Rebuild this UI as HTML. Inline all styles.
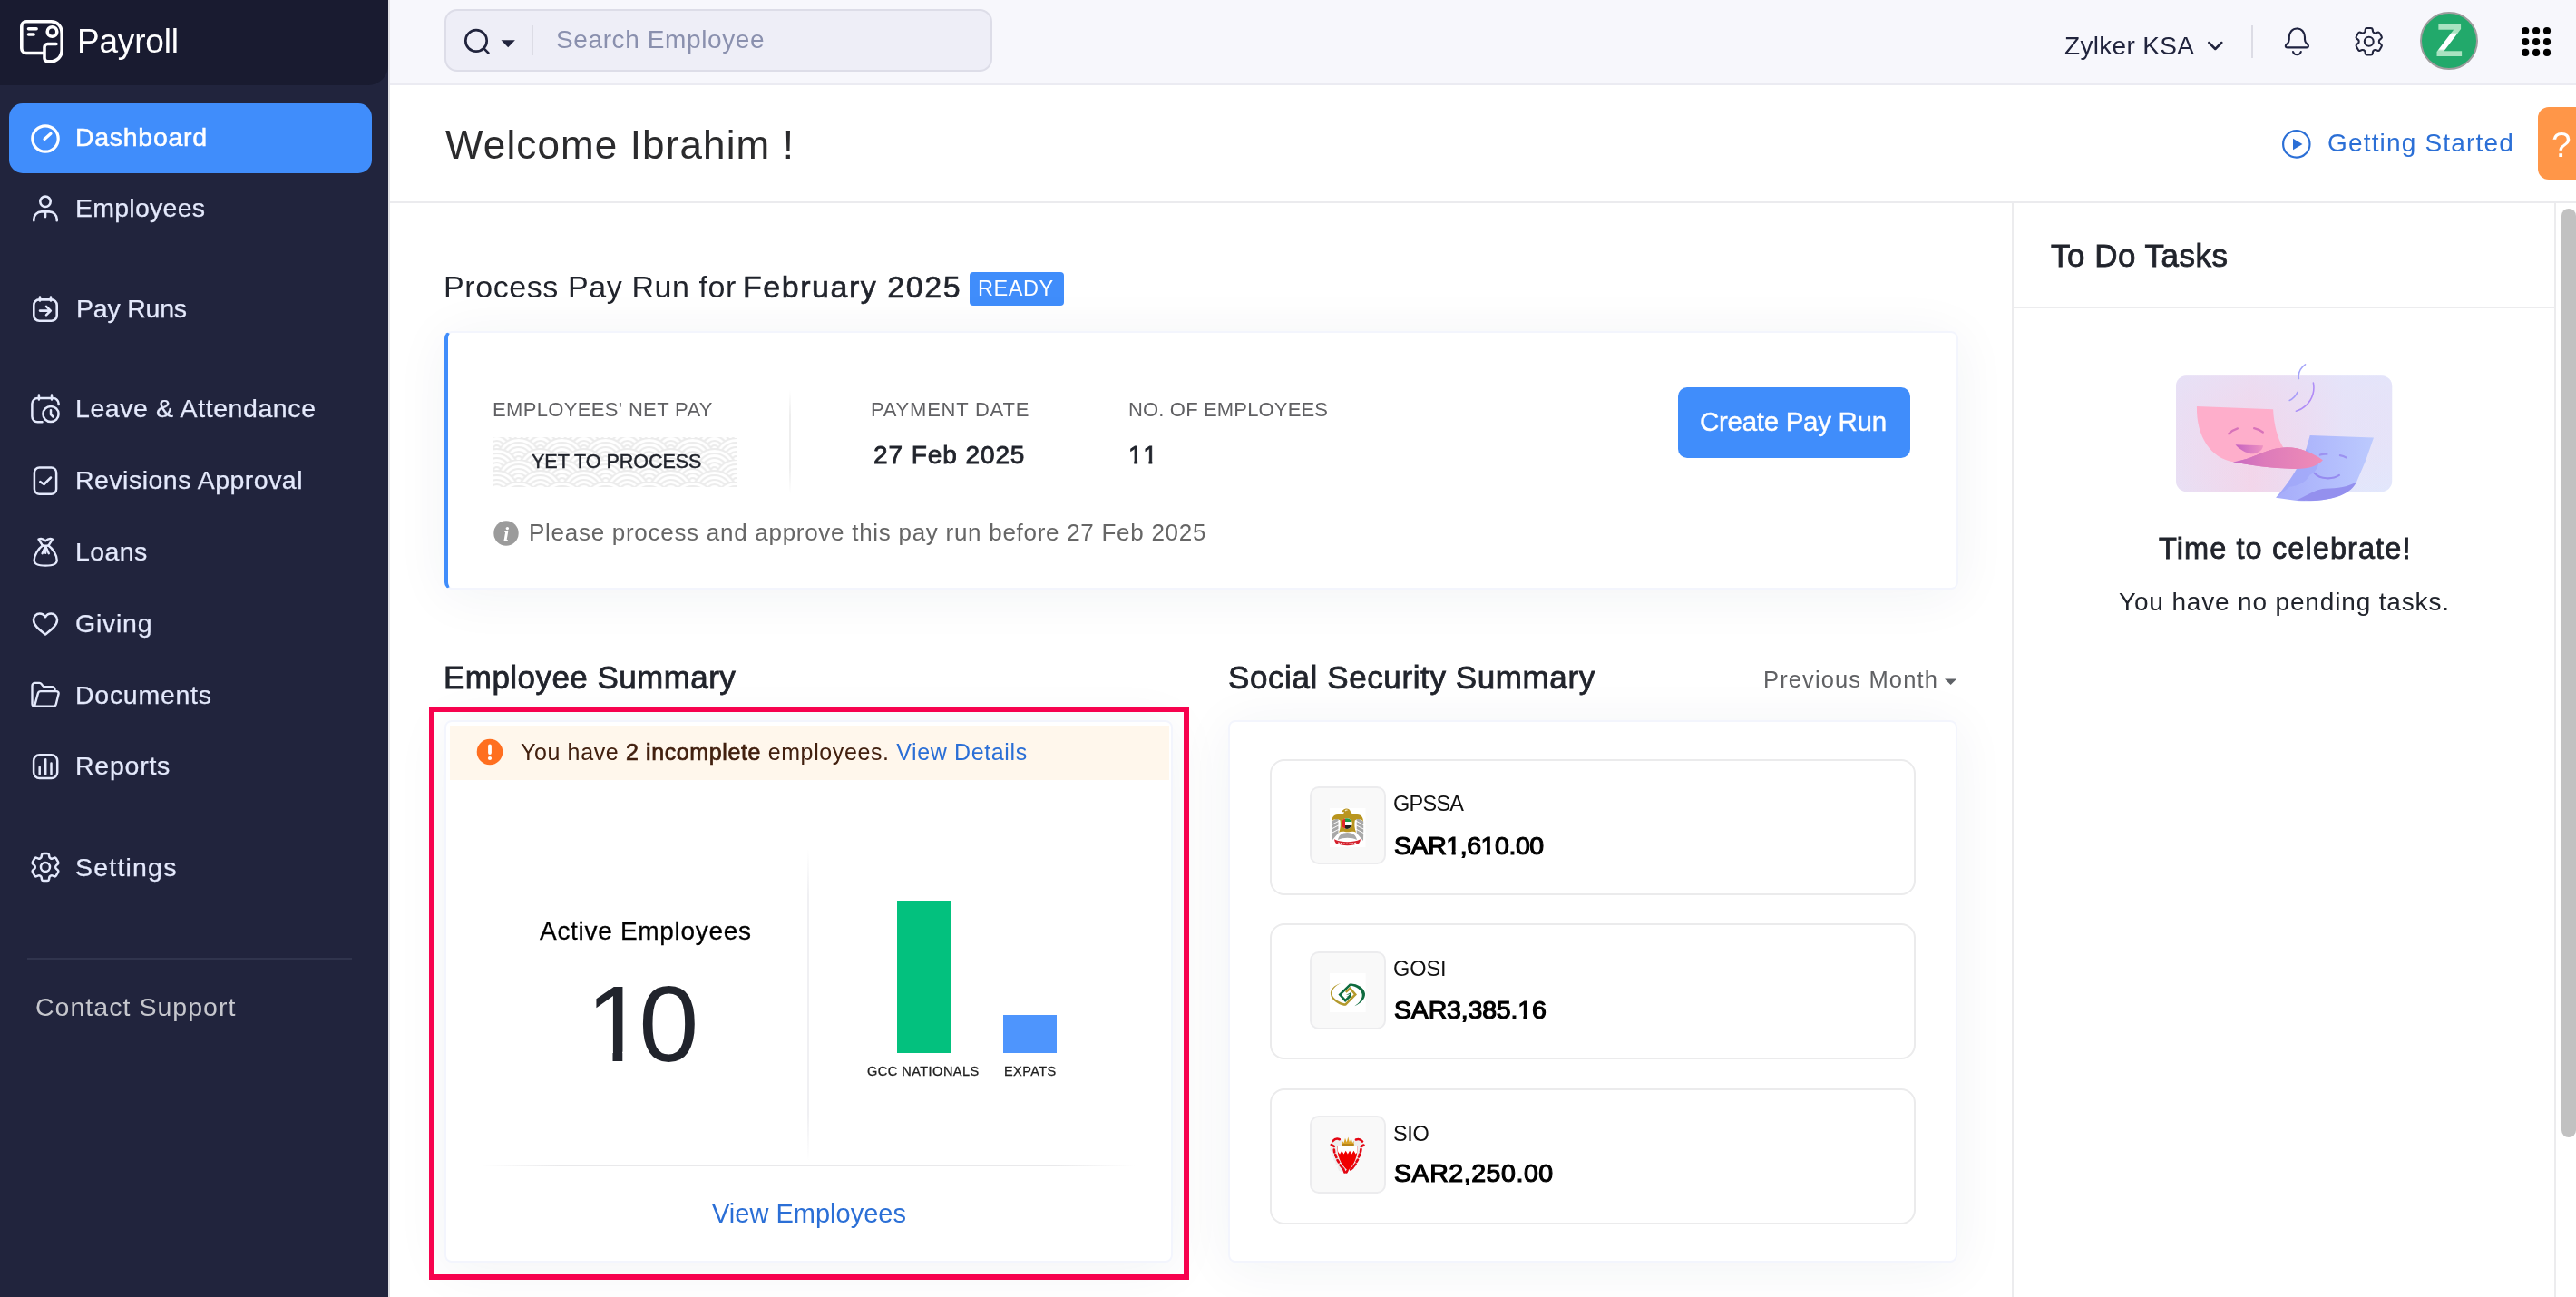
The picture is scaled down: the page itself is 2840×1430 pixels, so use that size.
<!DOCTYPE html>
<html lang="en">
<head>
<meta charset="utf-8">
<title>Payroll Dashboard</title>
<style>
*{box-sizing:border-box;margin:0;padding:0}
html,body{width:2840px;height:1430px;overflow:hidden;background:#fff}
body{font-family:"Liberation Sans",sans-serif;color:#21263c;position:relative}
.abs{position:absolute}
.t{position:absolute;white-space:nowrap;line-height:1;will-change:transform}
.m{-webkit-text-stroke:0.6px currentColor}
/* sidebar */
#side{position:absolute;left:0;top:0;width:428px;height:1430px;background:#21243d}
#brand{position:absolute;left:0;top:0;width:428px;height:94px;background:#191b30;border-bottom-right-radius:22px}
.nav{position:absolute;left:84px;white-space:nowrap;line-height:1;will-change:transform;font-size:28.5px;color:#e4e9fc;letter-spacing:.2px;-webkit-text-stroke:0.25px currentColor}
.ico{position:absolute;left:30px;width:40px;height:40px;fill:none;stroke:#e4e9fc;stroke-width:1.7;stroke-linecap:round;stroke-linejoin:round}
#active{position:absolute;left:10px;top:114px;width:400px;height:77px;border-radius:15px;background:#408dfb}
/* top bar */
#top{position:absolute;left:428px;top:0;width:2412px;height:94px;background:#f7f7fc;border-bottom:2px solid #ebebf2}
#search{position:absolute;left:490px;top:10px;width:604px;height:69px;border-radius:14px;background:#eeeef7;border:2px solid #dddde8}
/* page */
#hdrline{position:absolute;left:428px;top:222px;width:2412px;height:2px;background:#ebebee}
.card{position:absolute;background:#fff;border:2px solid #f3f5fd;border-radius:8px;box-shadow:0 6px 60px rgba(40,50,90,.058)}
.lbl{color:#606063;letter-spacing:1.1px;font-size:22px}
.ssi{position:absolute;left:1400px;width:712px;height:150px;border:2px solid #ebebec;border-radius:16px;background:#fff}
.logo{position:absolute;left:1444px;width:84px;height:86px;border:2px solid #ececee;border-radius:10px;background:#f9f9f9}
</style>
</head>
<body>

<!-- ============ SIDEBAR ============ -->
<div id="side"></div>
<div id="brand"></div>
<div id="active"></div>
<!--SIDEBAR-CONTENT-START-->
<svg class="abs" style="left:18px;top:18px" width="56" height="56" viewBox="18 18 56 56" fill="none" stroke="#fff" stroke-width="3.6" stroke-linecap="round" stroke-linejoin="round">
<path d="M49 58.5H29a5.2 5.2 0 0 1-5.200-5.200V29a5.200 5.200 0 0 1 5.200-5.200h27.500C63 23.800 68.200 29 68.200 37v17.500C68.200 62.500 63 67.800 55 67.800h-2.500a3.500 3.500 0 0 1-3.500-3.500V52a3.500 3.500 0 0 1 3.500-3.500h9.500"/>
<path d="M31.500 31.700h8.600M31.500 38h5.600"/>
<circle cx="57.500" cy="35" r="5.300"/>
</svg>
<div class="t" id="t_payroll" style="left:85.3px;top:27px;font-size:37px;color:#fff;letter-spacing:-0.2px">Payroll</div>

<svg class="ico" style="top:132.700px;stroke:#fff;stroke-width:3.200" viewBox="0 0 40 40"><circle cx="20" cy="20" r="14.200"/><path d="M19 20.500L26 14.200"/></svg>
<div class="nav" id="n0" style="-webkit-text-stroke-width:.5px;top:137.2px;color:#fff;left:83px;letter-spacing:0.71px">Dashboard</div>

<svg class="ico" style="top:209px;stroke-width:2.600" viewBox="0 0 40 40"><circle cx="20" cy="13.300" r="5.700"/><path d="M7.300 34.300v-1.500a8.400 8.400 0 0 1 8.400-8.400h8.600a8.400 8.400 0 0 1 8.400 8.400v1.500M20 24.600v5.500"/></svg>
<div class="nav" id="n1" style="top:214.8px;left:83.3px;letter-spacing:0.25px">Employees</div>

<svg class="ico" style="top:320px;stroke-width:2.600" viewBox="0 0 40 40"><rect x="7.300" y="10.400" width="25.400" height="23.400" rx="6"/><path d="M14 7.500v4M26 7.500v4M14 22.600h11.500M21 17.800l4.800 4.800-4.800 4.800"/></svg>
<div class="nav" id="n2" style="top:325.8px;left:83.6px;letter-spacing:-0.22px">Pay Runs</div>

<svg class="ico" style="top:430px;stroke-width:2.500" viewBox="0 0 40 40"><path d="M16.500 35.300H11.400a6 6 0 0 1-6-6V15.100a6 6 0 0 1 6-6h17.200a6 6 0 0 1 6 6v.8M12.900 5.600v5M27 5.600v5"/><circle cx="26" cy="26.500" r="8.600"/><path d="M26 22.300v4.700l2.500 2.500"/></svg>
<div class="nav" id="n3" style="top:436.3px;left:83.3px;letter-spacing:0.58px">Leave &amp; Attendance</div>

<svg class="ico" style="top:510px;stroke-width:2.500" viewBox="0 0 40 40"><rect x="7.900" y="5.400" width="24.200" height="29.300" rx="5.500"/><path d="M14.300 21.100l4.200 2.900 7.500-7.500"/></svg>
<div class="nav" id="n4" style="top:515.2px;left:83.3px;letter-spacing:0.48px">Revisions Approval</div>

<svg class="ico" style="top:589px;stroke-width:2.400" viewBox="0 0 40 40"><path d="M17 12.600C12 16 7.700 23.500 7.700 28.600c0 4.300 3.300 6 12.500 6s12.500-1.700 12.500-6c0-5.100-4.300-12.600-9.300-16"/><path d="M17 12.600l-4.500-7c2.500-1.200 5.300-.5 7.700 1.700 2.400-2.200 5.200-2.900 7.700-1.700l-4.500 7"/><path d="M17 12.600h6.400M20.200 13.200v7.500M20.200 13.200l-3.600 8M20.200 13.200l3.600 8"/></svg>
<div class="nav" id="n5" style="top:593.9px;left:83.3px;letter-spacing:0.39px">Loans</div>

<svg class="ico" style="top:668px;stroke-width:2.500" viewBox="0 0 40 40"><path d="M20 31.500C13 26 7 21.500 7 15.600c0-4 3-7 6.700-7 2.600 0 4.900 1.400 6.300 3.700 1.400-2.300 3.700-3.700 6.300-3.700 3.700 0 6.700 3 6.700 7 0 5.900-6 10.400-13 15.900z"/></svg>
<div class="nav" id="n6" style="top:672.9px;left:83.3px;letter-spacing:0.76px">Giving</div>

<svg class="ico" style="top:746px;stroke-width:2.400" viewBox="0 0 40 40"><path d="M30.500 15.500v-1.200a3 3 0 0 0-3-3H19.500c-1 0-1.700-.4-2.300-1.200l-1.500-2c-.6-.8-1.300-1.200-2.300-1.200H8.500a3 3 0 0 0-3 3v19.800c0 1.700 1 2.900 2.600 2.900"/><path d="M8.100 32.600h20.800c1.500 0 2.500-.8 2.900-2.300l2.700-11.200c.4-1.800-.6-3-2.400-3H14.800c-1.500 0-2.500.8-2.900 2.300L8.700 30.300c-.3 1.300-.6 2.300-.6 2.300z"/></svg>
<div class="nav" id="n7" style="top:751.9px;left:83.3px;letter-spacing:0.73px">Documents</div>

<svg class="ico" style="top:825px;stroke-width:2.500" viewBox="0 0 40 40"><rect x="7.100" y="7.300" width="26.100" height="25.800" rx="6.500"/><path d="M13.700 20.700v7.700M20.200 12.300v16.100M26.500 16.500v11.900"/></svg>
<div class="nav" id="n8" style="top:830.3px;left:83.3px;letter-spacing:0.76px">Reports</div>

<svg class="ico" style="top:936px;stroke-width:1.500" viewBox="0 0 24 24"><path d="M9.594 3.94c.09-.542.56-.94 1.110-.94h2.593c.55 0 1.020.398 1.110.94l.213 1.281c.063.374.313.686.645.87.074.04.147.083.220.127.325.196.720.257 1.075.124l1.217-.456a1.125 1.125 0 0 1 1.370.49l1.296 2.247a1.125 1.125 0 0 1-.260 1.431l-1.003.827c-.293.241-.438.613-.430.992a7.723 7.723 0 0 1 0 .255c-.008.378.137.750.430.991l1.004.827c.424.350.534.955.260 1.430l-1.298 2.247a1.125 1.125 0 0 1-1.369.491l-1.217-.456c-.355-.133-.750-.072-1.076.124a6.470 6.470 0 0 1-.220.128c-.331.183-.581.495-.644.869l-.213 1.281c-.09.543-.560.940-1.110.940h-2.594c-.55 0-1.019-.398-1.110-.940l-.213-1.281c-.062-.374-.312-.686-.644-.870a6.520 6.520 0 0 1-.220-.127c-.325-.196-.720-.257-1.076-.124l-1.217.456a1.125 1.125 0 0 1-1.369-.490l-1.297-2.247a1.125 1.125 0 0 1 .260-1.431l1.004-.827c.292-.240.437-.613.430-.991a6.932 6.932 0 0 1 0-.255c.007-.380-.138-.751-.430-.992l-1.004-.827a1.125 1.125 0 0 1-.260-1.430l1.297-2.247a1.125 1.125 0 0 1 1.370-.491l1.216.456c.356.133.751.072 1.076-.124.072-.044.146-.086.220-.128.332-.183.582-.495.644-.869l.214-1.280z"/><circle cx="12" cy="12" r="3"/></svg>
<div class="nav" id="n9" style="top:941.9px;left:83px;letter-spacing:1.2px">Settings</div>

<div class="abs" style="left:30px;top:1056px;width:358px;height:2px;background:#30344d"></div>
<div class="t" id="t_contact" style="left:38.9px;top:1096px;font-size:28.500px;color:#c6c7cd;letter-spacing:1.03px">Contact Support</div>
<!--SIDEBAR-CONTENT-END-->

<!-- ============ TOP BAR ============ -->
<div id="top"></div>
<div id="search"></div>
<!--TOPBAR-CONTENT-START-->
<svg class="abs" style="left:505px;top:25px" width="70" height="40" viewBox="505 25 70 40" fill="none" stroke="#21243d" stroke-width="2.700" stroke-linecap="round"><circle cx="525" cy="44.900" r="11.700"/><path d="M533.400 53.400l5 5"/><path d="M552.500 44.300h15.400l-7.700 8z" fill="#21243d" stroke="none"/></svg>
<div class="abs" style="left:586px;top:28px;width:2px;height:33px;background:#dcdce5"></div>
<div class="t" id="t_search" style="left:613px;top:30px;font-size:28px;color:#8a90ae;letter-spacing:0.61px">Search Employee</div>

<div class="t" id="t_org" style="left:2276.2px;top:36.6px;font-size:28px;color:#21243d;letter-spacing:0.32px">Zylker KSA</div>
<svg class="abs" style="left:2430px;top:40px" width="26" height="20" viewBox="2430 40 26 20" fill="none" stroke="#21243d" stroke-width="2.500" stroke-linecap="round" stroke-linejoin="round"><path d="M2435.300 47l7 7 7-7"/></svg>
<div class="abs" style="left:2482px;top:28px;width:2px;height:36px;background:#dcdce5"></div>
<svg class="abs" style="left:2512px;top:26px" width="40" height="40" viewBox="2512 26 40 40" fill="none" stroke="#1f2340" stroke-width="2.100" stroke-linecap="round" stroke-linejoin="round"><path d="M2532.400 31.500c-5.200 0-8.600 4.200-8.600 9.600v2.300c0 2.500-1.100 4-2.800 5.400-1.600 1.300-1.800 3.600.9 3.600h21c2.700 0 2.500-2.300.9-3.600-1.700-1.400-2.800-2.900-2.800-5.400v-2.300c0-5.400-3.400-9.600-8.600-9.600z"/><path d="M2528 57a4.600 4.600 0 0 0 8.800 0"/></svg>
<svg class="abs" style="left:2592.200px;top:26px;stroke-width:1.270" width="39.500" height="39.500" viewBox="0 0 24 24" fill="none" stroke="#21243d" stroke-linecap="round" stroke-linejoin="round"><path d="M9.594 3.94c.09-.542.56-.94 1.110-.94h2.593c.55 0 1.020.398 1.110.94l.213 1.281c.063.374.313.686.645.87.074.04.147.083.220.127.325.196.720.257 1.075.124l1.217-.456a1.125 1.125 0 0 1 1.370.49l1.296 2.247a1.125 1.125 0 0 1-.260 1.431l-1.003.827c-.293.241-.438.613-.430.992a7.723 7.723 0 0 1 0 .255c-.008.378.137.750.430.991l1.004.827c.424.350.534.955.260 1.430l-1.298 2.247a1.125 1.125 0 0 1-1.369.491l-1.217-.456c-.355-.133-.750-.072-1.076.124a6.470 6.470 0 0 1-.220.128c-.331.183-.581.495-.644.869l-.213 1.281c-.09.543-.560.940-1.110.940h-2.594c-.55 0-1.019-.398-1.110-.940l-.213-1.281c-.062-.374-.312-.686-.644-.870a6.520 6.520 0 0 1-.220-.127c-.325-.196-.720-.257-1.076-.124l-1.217.456a1.125 1.125 0 0 1-1.369-.490l-1.297-2.247a1.125 1.125 0 0 1 .260-1.431l1.004-.827c.292-.240.437-.613.430-.991a6.932 6.932 0 0 1 0-.255c.007-.380-.138-.751-.430-.992l-1.004-.827a1.125 1.125 0 0 1-.260-1.430l1.297-2.247a1.125 1.125 0 0 1 1.370-.491l1.216.456c.356.133.751.072 1.076-.124.072-.044.146-.086.220-.128.332-.183.582-.495.644-.869l.214-1.280z"/><circle cx="12" cy="12" r="3"/></svg>
<div class="abs" style="left:2668.200px;top:12.800px;width:64px;height:64px;border-radius:50%;background:#22a96b;border:2px solid #9d9d9d"></div>
<div class="t" id="t_z" style="left:2684.500px;top:19.800px;font-size:50px;font-weight:bold;color:transparent;background:linear-gradient(180deg,#a9e3c1 0,#a9e3c1 32%,#fff 36%,#fff 68%,#a9e3c1 72%);-webkit-background-clip:text;background-clip:text">Z</div>
<svg class="abs" style="left:2776px;top:27px" width="40" height="38" viewBox="2776 27 40 38" fill="#000"><circle cx="2784.2" cy="34" r="4.100"/><circle cx="2796.1" cy="34" r="4.100"/><circle cx="2808" cy="34" r="4.100"/><circle cx="2784.2" cy="46" r="4.100"/><circle cx="2796.1" cy="46" r="4.100"/><circle cx="2808" cy="46" r="4.100"/><circle cx="2784.2" cy="57.9" r="4.100"/><circle cx="2796.1" cy="57.9" r="4.100"/><circle cx="2808" cy="57.9" r="4.100"/></svg>
<!--TOPBAR-CONTENT-END-->

<!-- ============ PAGE HEADER ============ -->
<div id="hdrline"></div>
<div class="abs" style="left:428px;top:0;width:2px;height:1430px;background:#e2e2e6"></div>
<!--HEADER-CONTENT-START-->
<div class="t" id="t_welcome" style="left:491px;top:137.8px;font-size:44px;color:#2b2b2d;letter-spacing:1.12px">Welcome Ibrahim !</div>
<svg class="abs" style="left:2514px;top:141px" width="36" height="36" viewBox="2514 141 36 36" fill="none" stroke="#2b6fd6" stroke-width="2.200"><circle cx="2531.800" cy="158.900" r="14.700"/><path d="M2528 152.800v12.400l10.500-6.200z" fill="#2b6fd6" stroke="none"/></svg>
<div class="t" id="t_gs" style="left:2565.8px;top:143.5px;font-size:28px;color:#2b6fd6;letter-spacing:1.17px">Getting Started</div>
<div class="abs" style="left:2798px;top:118px;width:60px;height:80px;border-radius:12px;background:#ff9648"></div>
<div class="t" id="t_q" style="left:2813px;top:140px;font-size:39px;color:#fff">?</div>
<!--HEADER-CONTENT-END-->

<!-- ============ MAIN ============ -->
<!--MAIN-CONTENT-START-->
<!-- Process pay run heading -->
<div class="t" id="t_pp1" style="left:488.8px;top:299.4px;font-size:34px;color:#21242c;letter-spacing:0.59px">Process Pay Run for</div>
<div class="t m" id="t_pp2" style="left:819.3px;top:299.4px;font-size:34px;color:#21242c;letter-spacing:1.54px">February 2025</div>
<div class="abs" style="left:1069px;top:300px;width:104px;height:37px;border-radius:4px;background:#408dfb"></div>
<div class="t" id="t_ready" style="left:1077.9px;top:306.9px;font-size:23.500px;color:#fff;letter-spacing:0.55px">READY</div>

<!-- Pay run card -->
<div class="card" style="left:490px;top:364.800px;width:1668.500px;height:284.800px;border-left:4px solid #408dfb;border-radius:8px"></div>
<div class="t lbl" id="t_l1" style="left:542.8px;top:440.6px;letter-spacing:0.35px">EMPLOYEES' NET PAY</div>
<svg class="abs" style="left:544px;top:482px" width="268" height="55" viewBox="0 0 268 55"><defs><pattern id="sg" width="48" height="24" patternUnits="userSpaceOnUse" patternTransform="translate(3.700 1)"><rect width="48" height="24" fill="#fff"/><g fill="#fff" stroke="#ececec" stroke-width="2.200"><circle cx="0" cy="-12" r="24"/><circle cx="0" cy="-12" r="19"/><circle cx="0" cy="-12" r="14"/><circle cx="0" cy="-12" r="9"/><circle cx="0" cy="-12" r="4"/><circle cx="48" cy="-12" r="24"/><circle cx="48" cy="-12" r="19"/><circle cx="48" cy="-12" r="14"/><circle cx="48" cy="-12" r="9"/><circle cx="48" cy="-12" r="4"/><circle cx="24" cy="0" r="24"/><circle cx="24" cy="0" r="19"/><circle cx="24" cy="0" r="14"/><circle cx="24" cy="0" r="9"/><circle cx="24" cy="0" r="4"/><circle cx="0" cy="12" r="24"/><circle cx="0" cy="12" r="19"/><circle cx="0" cy="12" r="14"/><circle cx="0" cy="12" r="9"/><circle cx="0" cy="12" r="4"/><circle cx="48" cy="12" r="24"/><circle cx="48" cy="12" r="19"/><circle cx="48" cy="12" r="14"/><circle cx="48" cy="12" r="9"/><circle cx="48" cy="12" r="4"/><circle cx="24" cy="24" r="24"/><circle cx="24" cy="24" r="19"/><circle cx="24" cy="24" r="14"/><circle cx="24" cy="24" r="9"/><circle cx="24" cy="24" r="4"/><circle cx="0" cy="36" r="24"/><circle cx="0" cy="36" r="19"/><circle cx="0" cy="36" r="14"/><circle cx="0" cy="36" r="9"/><circle cx="0" cy="36" r="4"/><circle cx="48" cy="36" r="24"/><circle cx="48" cy="36" r="19"/><circle cx="48" cy="36" r="14"/><circle cx="48" cy="36" r="9"/><circle cx="48" cy="36" r="4"/></g></pattern></defs><rect width="268" height="55" fill="url(#sg)"/></svg>
<div class="t m" id="t_ytp" style="-webkit-text-stroke-width:.45px;left:586px;top:498.5px;font-size:21.500px;color:#21242c;letter-spacing:-0.01px">YET TO PROCESS</div>
<div class="abs" style="left:870px;top:430px;width:2px;height:114px;background:linear-gradient(180deg,rgba(238,238,238,0),#eee 25%,#eee 75%,rgba(238,238,238,0))"></div>
<div class="t lbl" id="t_l2" style="left:959.8px;top:440.6px;letter-spacing:0.77px">PAYMENT DATE</div>
<div class="t m" id="t_date" style="left:962.6px;top:488.3px;font-size:28px;color:#21242c;-webkit-text-stroke-width:.8px;letter-spacing:0.92px">27 Feb 2025</div>
<div class="t lbl" id="t_l3" style="left:1243.5px;top:440.6px;letter-spacing:0.16px">NO. OF EMPLOYEES</div>
<div class="t m" id="t_11" style="left:1243.800px;top:488.300px;font-size:28px;color:#21242c;-webkit-text-stroke-width:.8px;letter-spacing:.600px"><span style="display:inline-block;clip-path:polygon(0 0,100% 0,100% 19.800px,10.100px 19.800px,10.100px 100%,6.300px 100%,6.300px 19.800px,0 19.800px)">1</span><span style="display:inline-block;clip-path:polygon(0 0,100% 0,100% 19.800px,10.100px 19.800px,10.100px 100%,6.300px 100%,6.300px 19.800px,0 19.800px)">1</span></div>
<div class="abs" style="left:1850px;top:427px;width:256px;height:78px;border-radius:10px;background:#408dfb"></div>
<div class="t" id="t_btn" style="left:1874.3px;top:450.3px;font-size:29.500px;color:#fff;letter-spacing:-0.29px;-webkit-text-stroke:.4px #fff">Create Pay Run</div>
<svg class="abs" style="left:544px;top:574px" width="28" height="28" viewBox="0 0 28 28"><circle cx="14" cy="14" r="13.700" fill="#9b9b9b"/><text x="14" y="21.500" text-anchor="middle" font-family="Liberation Serif,serif" font-style="italic" font-weight="bold" font-size="22" fill="#fff">i</text></svg>
<div class="t" id="t_info" style="left:583.2px;top:573.9px;font-size:26px;color:#666;letter-spacing:0.72px">Please process and approve this pay run before 27 Feb 2025</div>

<!-- Employee summary -->
<div class="t m" id="t_es" style="-webkit-text-stroke-width:.8px;left:489px;top:729px;font-size:35px;color:#21242c;letter-spacing:0.45px">Employee Summary</div>
<div class="card" style="left:490px;top:793.600px;width:803px;height:598px"></div>
<div class="abs" style="left:495.500px;top:800px;width:793px;height:60px;background:#fff7ec"></div>
<svg class="abs" style="left:525px;top:814px" width="30" height="30" viewBox="0 0 30 30"><circle cx="15" cy="15" r="14.300" fill="#ff6f20"/><rect x="13.100" y="6.500" width="3.800" height="11.500" rx="1.900" fill="#fff"/><circle cx="15" cy="22" r="2.100" fill="#fff"/></svg>
<div class="t" id="t_alert" style="left:573.8px;top:816.6px;font-size:25px;color:#42200f;letter-spacing:0.62px">You have <span class="m" style="-webkit-text-stroke-width:.7px">2 incomplete</span> employees. <span style="color:#2b6fd6" id="t_vd">View Details</span></div>
<div class="t" id="t_ae" style="-webkit-text-stroke:.3px #000;left:595px;top:1013.3px;font-size:28px;color:#000;letter-spacing:0.7px">Active Employees</div>
<div class="t" id="t_10" style="left:646px;top:1069.400px;font-size:119px;color:#21242c;letter-spacing:-8px"><span style="display:inline-block;clip-path:polygon(0 0,100% 0,100% 90.700px,40.300px 90.700px,40.300px 100%,29.500px 100%,29.500px 90.700px,0 90.700px)">1</span>0</div>
<div class="abs" style="left:890px;top:936px;width:2px;height:344px;background:linear-gradient(180deg,rgba(240,240,243,0),#f0f0f3 15%,#f0f0f3 85%,rgba(240,240,243,0))"></div>
<div class="abs" style="left:989px;top:993px;width:59px;height:168px;background:#03c17e"></div>
<div class="abs" style="left:1106px;top:1119px;width:59px;height:42px;background:#4e95fd"></div>
<div class="t" id="t_gcc" style="left:955.7px;top:1173.8px;font-size:14.500px;-webkit-text-stroke:.3px #222;color:#222;letter-spacing:0.49px">GCC NATIONALS</div>
<div class="t" id="t_exp" style="left:1106.7px;top:1173.8px;font-size:14.500px;-webkit-text-stroke:.3px #222;color:#222;letter-spacing:0.4px">EXPATS</div>
<div class="abs" style="left:530px;top:1284px;width:722px;height:2px;background:linear-gradient(90deg,rgba(233,233,235,0),#e9e9eb 12%,#e9e9eb 88%,rgba(233,233,235,0))"></div>
<div class="t" id="t_ve" style="left:785px;top:1324.1px;font-size:29px;color:#2b6fd6;letter-spacing:0.01px">View Employees</div>
<div class="abs" style="left:473px;top:779px;width:838px;height:632px;border:6px solid #f7024e"></div>

<!-- Social security -->
<div class="t m" id="t_ss" style="-webkit-text-stroke-width:.8px;left:1353.7px;top:729px;font-size:35px;color:#21242c;letter-spacing:0.6px">Social Security Summary</div>
<div class="t" id="t_pm" style="left:1943.5px;top:737.2px;font-size:25.500px;color:#606164;letter-spacing:1.13px">Previous Month</div>
<svg class="abs" style="left:2143px;top:747px" width="16" height="10" viewBox="0 0 16 10"><path d="M1 1.400h13.200l-6.600 6.600z" fill="#5e6166"/></svg>
<div class="card" style="left:1354px;top:793.600px;width:804px;height:598px"></div>

<div class="ssi" style="top:836.500px"></div>
<div class="logo" style="top:867px"></div>
<div class="t" id="t_s1n" style="left:1535.6px;top:875.4px;font-size:23.500px;color:#111;letter-spacing:-0.75px">GPSSA</div>
<div class="t m" id="t_s1a" style="left:1536.6px;top:918.1px;font-size:28.500px;color:#000;-webkit-text-stroke-width:1.200px;letter-spacing:-0.44px">SAR<span style="display:inline-block;clip-path:polygon(0 0,100% 0,100% 20.100px,10.400px 20.100px,10.400px 100%,6.300px 100%,6.300px 20.100px,0 20.100px)">1</span>,6<span style="display:inline-block;clip-path:polygon(0 0,100% 0,100% 20.100px,10.400px 20.100px,10.400px 100%,6.300px 100%,6.300px 20.100px,0 20.100px)">1</span>0.00</div>

<div class="ssi" style="top:1018px"></div>
<div class="logo" style="top:1049px"></div>
<div class="t" id="t_s2n" style="left:1535.6px;top:1057.1px;font-size:23.500px;color:#111;letter-spacing:-0.07px">GOSI</div>
<div class="t m" id="t_s2a" style="left:1536.6px;top:1099.1px;font-size:28.500px;color:#000;-webkit-text-stroke-width:1.200px;letter-spacing:-0.18px">SAR3,385.<span style="display:inline-block;clip-path:polygon(0 0,100% 0,100% 20.100px,10.400px 20.100px,10.400px 100%,6.300px 100%,6.300px 20.100px,0 20.100px)">1</span>6</div>

<div class="ssi" style="top:1199.500px"></div>
<div class="logo" style="top:1230px"></div>
<div class="t" id="t_s3n" style="left:1535.6px;top:1238.7px;font-size:23.500px;color:#111;letter-spacing:-0.4px">SIO</div>
<div class="t m" id="t_s3a" style="left:1536.6px;top:1279.2px;font-size:28.500px;color:#000;-webkit-text-stroke-width:1.200px;letter-spacing:0.56px">SAR2,250.00</div>
<!--LOGOS-START-->
<svg class="abs" style="left:1466px;top:890.500px" width="39.500" height="43.500" viewBox="0 0 39.500 43.500">
<rect width="39.500" height="43.500" fill="#fff"/>
<g fill="#a8a8a8"><path d="M2 14.500l7.500-4v3.500L2 18zM2 19l7.500-4v3.500L2 22.500zM2 23.500l7.500-4v3.500L2 27zM2 28l7.500-4v3.500L2.200 36zM37.200 14.500l-7.500-4v3.500l7.500 4zM37.200 19l-7.500-4v3.500l7.500 4zM37.200 23.500l-7.500-4v3.500l7.500 4zM37.200 28l-7.500-4v3.500l7.300 8.500z"/><path d="M9 35c1-5 4-8 10.500-8S29 30 30 35c-3-1.500-6.500-2.200-10.500-2.200S12 33.500 9 35z"/></g>
<path d="M17.800.6c2.300-.5 4.300.8 5 3 .5 1.600 1.500 2.600 3.300 2.900 2.600.4 5.700.1 8 1.600 1.900 1.300 2.800 3.600 2.900 6.400-1.700-1.800-4-2.600-6.800-2.400l-2.500 1.500c-.6 4.500-.5 9 1.400 13.200-1.600-1-3-1.300-4.300-1-1.600.4-3 .4-5.200.4s-3.600 0-5.200-.4c-1.300-.3-2.700 0-4.300 1 1.900-4.200 2-8.700 1.400-13.200L9 12.100c-2.800-.2-5.100.6-6.800 2.400.1-2.800 1-5.100 2.900-6.400 2.300-1.500 5.400-1.200 8-1.600 1.500-.2 2.500-.9 3.100-2.100l-3-.4c.9-1.700 2.500-3 4.600-3.400z" fill="#b9951f"/>
<path d="M16.500 2.200c1.200-.9 3-1 4.200.2-1.300-.2-2.300.2-3 1.200l-1.200-1.400z" fill="#f3ead0"/>
<circle cx="19" cy="17" r="5.900" fill="#fff"/>
<path d="M17 11.500a5.900 5.900 0 0 1 7.500 3.500H17z" fill="#1f9a48"/><path d="M17 19h7.500a5.900 5.900 0 0 1-7.500 3.600z" fill="#222"/><path d="M17 11.400v11.200A5.900 5.900 0 0 1 17 11.400z" fill="#e32626"/>
<path d="M5 34.300c4.500 2.200 9.300 2.900 14.500 2.900s10-.7 14.500-2.900c-.2 1.800-.8 3.300-1.800 4.500-3.800 1.700-8 2.400-12.700 2.400s-8.900-.7-12.700-2.400C5.800 37.600 5.200 36.100 5 34.300z" fill="#d4202c"/>
<path d="M9 38c3.400.9 7 1.300 10.500 1.300s7.100-.4 10.500-1.300" fill="none" stroke="#f6d9db" stroke-width="1.100" stroke-dasharray="2.200 .8"/>
</svg>
<svg class="abs" style="left:1466px;top:1072.500px" width="39.700" height="43.500" viewBox="0 0 39.700 43.500">
<rect width="39.700" height="43.500" fill="#fff"/>
<path d="M12.300 10.900C4.500 13.300.2 18 1 23.500c.9 5.800 7.500 10.800 15.500 12.600l1.800-2.300C10.500 32.300 3.600 28.300 2.600 23 1.800 18.600 5.800 14 12.300 10.900z" fill="#b49a2e"/>
<path d="M16.800 35.200L28.300 23.500l-5.900-6.800-4.700 4.200" fill="none" stroke="#b49a2e" stroke-width="2.500" stroke-linejoin="miter"/>
<path d="M22.400 11.200c8.800.5 16.100 5.200 16.600 11.400.4 5.600-4.400 10.800-11.600 13.600 5.300-3.400 8.700-7.900 8.300-12.700-.5-5.200-6.200-8.900-13.300-10.100z" fill="#0e6b3f"/>
<path d="M22.800 12.300L11.200 23.500l6 6.700 6-5.700" fill="none" stroke="#0e6b3f" stroke-width="2.500" stroke-linejoin="miter"/>
<path d="M22.500 21.300c-1.200 1.400-2.800 2.100-4.500 2.400 1.700.2 3.200-.1 4.500-.9-.9 1.600-2.400 2.600-4.300 3.100 2.600.1 4.600-.9 5.600-3z" fill="#0e6b3f"/>
</svg>
<svg class="abs" style="left:1466px;top:1253px" width="39.700" height="43.500" viewBox="0 0 39.700 43.500">
<path d="M3 4.500c2-2.500 5-3.500 8-2l3 3h11.500l3-2.700c3-1.200 6-.3 7.800 2.200l1.500 3-2 1.500.5 2.800-2 1.200.2 3-2.200 1.500-.2 3-2 2-.2 3.200-2.300 1.800-1 3-3 1.500-1 3-3.500.5-1.500 2.500-2.300-2.200-2.200 3-3-1.500-1.500-3.500.8-2-2.800-1.500-.5-3-2-2 .3-3-2.300-2.200.5-3-2.500-2 .5-3.200L1 9l2-1.500z" fill="#ededed"/>
<path d="M3.500 5c2-2.300 4.800-3 7.300-1.800M1.800 9.200l3 1.600M4.800 14.500l.4 3M6.300 20l1 3M8.500 26l1.500 2.500M11.500 31.500l2 2.500M15 35.500l1.500 4M18.500 39.500l1-2M36 5.500c-1.800-2.200-4.500-3-7-2M37.500 9.500l-2.800 1.500M34.500 14l-.5 3M33 19.500l-1 3M31 25.500l-1.500 2.500M28.500 30.500l-2 2.500M25.500 34.500l-2.500 2" fill="none" stroke="#e30613" stroke-width="2.600" stroke-linecap="round"/>
<path d="M8.500 10.800h22c.4 9.500-2.300 19.500-10.500 27C11.200 30.300 8.200 20.300 8.500 10.800z" fill="#f00000"/>
<path d="M8.500 10.800h22c.1 2.200 0 4.400-.3 6.600l-1.500 2-2.200-3.600-2.200 3.600-2.200-3.600-2.200 3.600-2.200-3.600-2.200 3.600-2.200-3.600-2.200 3.600-1.900-2.500c-.4-2.100-.6-4.100-.5-6.100z" fill="#fff"/>
<path d="M13.900 10V5l1.600 2.200L17 1.800l1.700 4.600L20.300.6l1.600 5.800 1.700-4.600 1.500 5.400L26.600 5v5z" fill="#d9a326"/><path d="M13.900 8h12.700v2.200H13.900z" fill="#b88418"/>
</svg>
<!--LOGOS-END-->
<!--MAIN-CONTENT-END-->

<!-- ============ TODO PANEL ============ -->
<!--TODO-CONTENT-START-->
<div class="abs" style="left:2218px;top:224px;width:2px;height:1206px;background:#ececee"></div>
<div class="abs" style="left:2816px;top:224px;width:2px;height:1206px;background:#ececee"></div>
<div class="abs" style="left:2218px;top:338px;width:600px;height:2px;background:#ececee"></div>
<div class="abs" style="left:2824px;top:230px;width:16px;height:1024px;background:#c1c1c1;border-radius:8px 8px 8px 8px"></div>
<div class="t m" id="t_todo" style="-webkit-text-stroke-width:.8px;left:2260.9px;top:263.6px;font-size:35px;color:#21242c;letter-spacing:0.51px">To Do Tasks</div>
<!--ILLUS-START-->
<svg class="abs" style="left:2380px;top:390px" width="280" height="170" viewBox="0 0 280 170">
<defs>
<linearGradient id="ibg" x1="0" y1="0" x2="1" y2="0"><stop offset="0" stop-color="#e8e0f5"/><stop offset=".35" stop-color="#f2d6ea"/><stop offset=".6" stop-color="#eaddf3"/><stop offset=".78" stop-color="#e3e6fb"/><stop offset="1" stop-color="#e2e7fc"/></linearGradient>
<linearGradient id="ibg2" x1="0" y1="0" x2="0" y2="1"><stop offset="0" stop-color="#e6e2f8" stop-opacity=".55"/><stop offset="1" stop-color="#f8d0e6" stop-opacity="0"/></linearGradient>
<linearGradient id="icurl" x1="0" y1="0" x2="1" y2="0"><stop offset="0" stop-color="#c768c2"/><stop offset=".35" stop-color="#dd7bba"/><stop offset="1" stop-color="#ef8cb7"/></linearGradient>
<linearGradient id="imouth" x1="0" y1="0" x2="1" y2="0"><stop offset="0" stop-color="#c562c1"/><stop offset="1" stop-color="#ee92c2"/></linearGradient>
<linearGradient id="iblue" x1="0" y1="0" x2="1" y2="0"><stop offset="0" stop-color="#a6acfa"/><stop offset="1" stop-color="#bccafe"/></linearGradient>
<linearGradient id="iarc" x1="0" y1="0" x2="1" y2="1"><stop offset="0" stop-color="#9db4fb"/><stop offset="1" stop-color="#b57ff5"/></linearGradient>
</defs>
<rect x="19" y="24.200" width="238.200" height="127.800" rx="11.500" fill="url(#ibg)"/>
<rect x="19" y="24.200" width="238.200" height="127.800" rx="11.500" fill="url(#ibg2)"/>
<g transform="scale(.13108)">
<path d="M320 443L962 468C968 600 1000 715 1048 790C900 815 790 895 625 910C440 880 315 700 320 443Z" fill="#feaecb"/>
<path d="M625 910C800 890 900 790 1080 788C1200 788 1320 850 1380 895C1330 950 1250 968 1150 968C950 965 750 935 625 910Z" fill="url(#icurl)"/>
<path d="M645 765L878 772C872 828 800 852 760 838C710 825 670 795 645 765Z" fill="url(#imouth)"/>
<path d="M588 673C610 652 635 637 663 628M802 627C830 634 855 645 876 660" fill="none" stroke="#d873ba" stroke-width="17" stroke-linecap="round"/>
<path d="M1272 686L1808 706L1740 900L1665 1075C1600 1200 1400 1250 1160 1235L985 1212C1080 1100 1180 960 1240 800Z" fill="url(#iblue)"/>
<path d="M1240 800C1200 930 1100 1080 985 1212L1100 1120C1200 1110 1250 1060 1270 1020C1330 990 1350 930 1340 900Z" fill="#9da4f8" opacity=".6"/>
<path d="M1160 1232C1250 1190 1320 1140 1400 1135C1500 1130 1600 1120 1665 1075C1610 1190 1450 1250 1160 1232Z" fill="#9490ee"/>
<path d="M625 910C800 890 900 790 1080 788C1200 788 1320 850 1380 895C1330 950 1250 968 1150 968C950 965 750 935 625 910Z" fill="url(#icurl)"/>
<path d="M1357 851C1376 845 1396 843 1414 845M1525 855C1544 858 1561 864 1574 873" fill="none" stroke="#9c92f1" stroke-width="17" stroke-linecap="round"/>
<path d="M1310 1005C1360 1058 1460 1060 1518 1022" fill="none" stroke="#968bf0" stroke-width="16" stroke-linecap="round"/>
<path d="M1232 90C1190 120 1170 160 1178 210M1300 245C1320 350 1260 450 1155 482M1168 322C1150 360 1130 380 1100 393" fill="none" stroke="url(#iarc)" stroke-width="12" stroke-linecap="round"/>
</g>
</svg>
<!--ILLUS-END-->
<div class="t m" id="t_ttc" style="-webkit-text-stroke-width:.8px;left:2380.2px;top:589.1px;font-size:32.500px;color:#21242c;letter-spacing:1.09px">Time to celebrate!</div>
<div class="t" id="t_npt" style="left:2336px;top:649.9px;font-size:28px;color:#21242c;letter-spacing:0.84px">You have no pending tasks.</div>
<!--TODO-CONTENT-END-->

</body>
</html>
